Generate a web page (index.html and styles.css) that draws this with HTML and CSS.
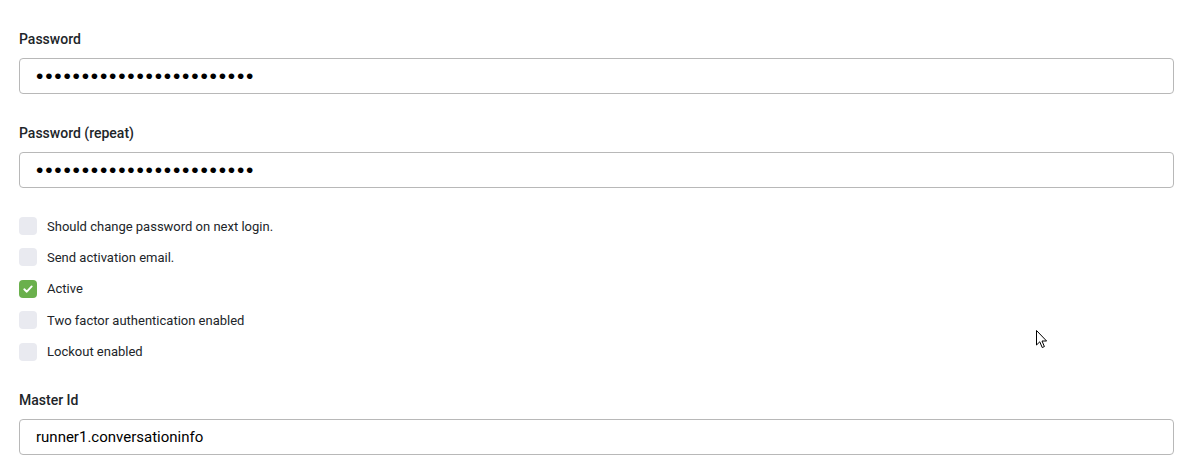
FILE: index.html
```html
<!DOCTYPE html>
<html>
<head>
<meta charset="utf-8">
<link rel="stylesheet" href="styles.css">
</head>
<body>
<form class="form">
  <div class="field">
    <label class="label">Password</label>
    <input class="input" type="password" value="aaaaaaaaaaaaaaaaaaaaaaaa">
  </div>
  <div class="field">
    <label class="label">Password (repeat)</label>
    <input class="input" type="password" value="aaaaaaaaaaaaaaaaaaaaaaaa">
  </div>
  <div class="checks">
    <div class="check"><span class="box"></span><span class="check-label">Should change password on next login.</span></div>
    <div class="check"><span class="box"></span><span class="check-label">Send activation email.</span></div>
    <div class="check"><span class="box box-on"><svg width="12" height="12" viewBox="0 0 12 12"><path d="M2.3 6.3 L4.8 8.7 L9.7 3.4" fill="none" stroke="#fff" stroke-width="1.9" stroke-linecap="round" stroke-linejoin="round"/></svg></span><span class="check-label">Active</span></div>
    <div class="check"><span class="box"></span><span class="check-label">Two factor authentication enabled</span></div>
    <div class="check"><span class="box"></span><span class="check-label">Lockout enabled</span></div>
  </div>
  <div class="field">
    <label class="label">Master Id</label>
    <input class="input" type="text" value="runner1.conversationinfo">
  </div>
</form>
<svg class="cursor" width="14" height="20" viewBox="0 0 14 20"><path d="M0.5 0.5 L0.5 15 L3.8 11.8 L6.2 17.5 L8.4 16.6 L6 11 L10.6 11 Z" fill="#fff" stroke="#000" stroke-width="1" stroke-linejoin="miter"/></svg>
</body>
</html>
```
FILE: styles.css
```css
html, body {
  margin: 0;
  padding: 0;
  background: #fff;
}
body {
  font-family: Roboto, "Liberation Sans", sans-serif;
  color: #212529;
  position: relative;
  width: 1194px;
  height: 458px;
  overflow: hidden;
}
.form {
  padding: 29px 20px 0 19px;
  display: flex;
  flex-direction: column;
}
.field {
  display: flex;
  flex-direction: column;
  margin-bottom: 29px;
}
.label {
  font-size: 14px;
  font-weight: 500;
  line-height: 20px;
  margin-bottom: 9px;
  color: #212529;
}
.input {
  box-sizing: border-box;
  height: 36px;
  width: 100%;
  border: 1px solid #b8b8b8;
  border-radius: 4px;
  padding: 0 16px;
  font-family: Roboto, "Liberation Sans", sans-serif;
  font-size: 15px;
  color: #000;
  outline: none;
  background: #fff;
}
.input[type="password"] {
  font-family: "Liberation Sans", sans-serif;
  font-size: 21px;
  letter-spacing: 1.78px;
  padding-left: 16px;
}
.checks {
  display: flex;
  flex-direction: column;
  gap: 13.4px;
  margin-bottom: 29.5px;
}
.check {
  display: flex;
  align-items: center;
  height: 18px;
}
.box {
  width: 18px;
  height: 18px;
  border-radius: 4px;
  background: #e9eaf0;
  margin-right: 10px;
  display: flex;
  align-items: center;
  justify-content: center;
}
.box-on {
  background: #6ab04c;
}
.check-label {
  font-size: 13px;
  color: #212529;
}
.cursor {
  position: absolute;
  left: 1036px;
  top: 330px;
}
```
